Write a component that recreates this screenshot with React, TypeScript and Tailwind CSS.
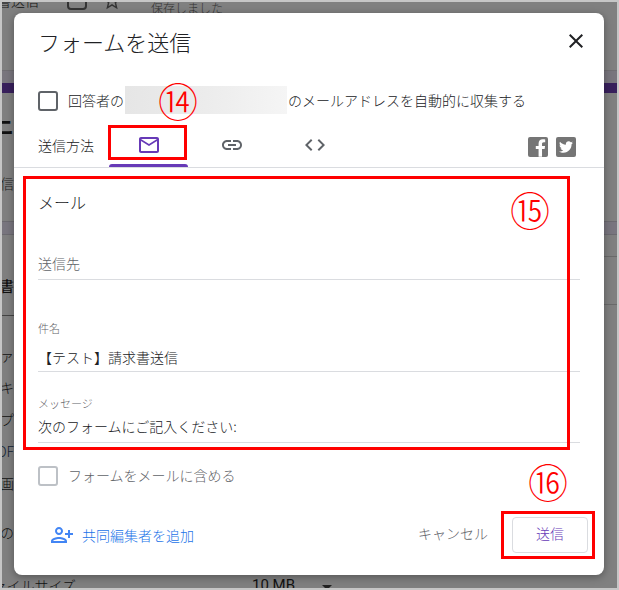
import { useState } from "react";
import { FaFacebookF, FaTwitter } from "react-icons/fa";
import {
  MdArrowDropDown,
  MdClose,
  MdCode,
  MdLink,
  MdOutlineEmail,
  MdOutlinePersonAddAlt1,
  MdStarBorder,
} from "react-icons/md";

const TABS = [
  { id: "mail", label: "メール", Icon: MdOutlineEmail },
  { id: "link", label: "リンク", Icon: MdLink },
  { id: "embed", label: "埋め込み", Icon: MdCode },
];

function StepMark({ n, className }: { n: string; className: string }) {
  return (
    <span className={`pointer-events-none absolute text-[40px] leading-10 text-[#f00] ${className}`}>{n}</span>
  );
}

// Dimmed form editor behind the dialog
function EditorBackdrop() {
  return (
    <div aria-hidden="true" className="absolute inset-0 flex flex-col overflow-hidden bg-[#808080] text-sm leading-5 text-[#111]">
      <div className="h-[69px] shrink-0 border-b border-[#706e73]">
        <div className="-mt-3 flex h-5 items-start">
          <span className="flex w-[37px] shrink-0 justify-end whitespace-nowrap">書送信</span>
          <span className="ml-7 h-5 w-5 rounded-sm border-2 border-[#333]" />
          <MdStarBorder className="ml-[14px] size-[22px] text-[#333]" />
          <span className="mt-3 ml-7 text-xs leading-3 text-[#333]">保存しました</span>
        </div>
      </div>
      <div className="h-3 shrink-0 bg-[#79767e]" />
      <div className="h-[10px] shrink-0 bg-[#38205c]" />
      <div className="flex h-[128px] w-3 shrink-0 flex-col items-end overflow-hidden whitespace-nowrap">
        <span className="mt-6 text-xl leading-5 font-bold">ニ</span>
        <span className="mt-9 text-[#222]">送信</span>
      </div>
      <div className="h-[14px] shrink-0 border-y border-[#6c6a70] bg-[#79767f]" />
      <div className="flex h-[340px] shrink-0 justify-between">
        <div className="flex w-3 flex-col items-end overflow-hidden whitespace-nowrap">
          <span className="mt-10 font-medium">書</span>
          <span className="mt-5 w-3 border-t border-[#444]" />
          <span className="mt-[29px]">ファ</span>
          <span className="mt-3">キ</span>
          <span className="mt-3">プ</span>
          <span className="mt-3 text-[#123]">DF</span>
          <span className="mt-3">画</span>
          <span className="mt-[29px]">ルの</span>
        </div>
        <div className="w-[13px]">
          <div className="h-[22px] border-b border-[#6a6a6a]" />
          <div className="h-12 border-b border-[#6a6a6a]" />
        </div>
      </div>
      <div className="flex h-5 shrink-0 whitespace-nowrap">
        <span className="flex w-[74px] shrink-0 justify-end">ファイルサイズ</span>
        <span className="ml-[176px] font-[Roboto,sans-serif] text-[15px] font-normal">10 MB</span>
        <MdArrowDropDown className="ml-5 size-6 text-[#222]" />
      </div>
    </div>
  );
}

export default function App() {
  const [tab, setTab] = useState("mail");
  const [to, setTo] = useState("");
  const [subject, setSubject] = useState("【テスト】請求書送信");
  const [message, setMessage] = useState("次のフォームにご記入ください:");

  return (
    <div className="relative flex min-h-screen flex-col border-2 border-[#c6c6c6] pt-[11px] pr-[13px] pb-[13px] pl-3 font-['Noto_Sans_CJK_JP',sans-serif] font-light">
      <EditorBackdrop />

      <div role="dialog" aria-labelledby="dialog-title" className="relative rounded-lg bg-white text-sm text-[#202124] shadow-[0_2px_8px_rgba(0,0,0,0.35)]">
        <header className="flex h-[60px] items-center justify-between pr-4 pb-1 pl-6">
          <h1 id="dialog-title" className="text-[22px] leading-8">フォームを送信</h1>
          <button type="button" aria-label="閉じる">
            <MdClose className="size-6" />
          </button>
        </header>

        <div className="relative flex h-14 items-center pl-6">
          <input id="collect" type="checkbox" className="size-5 appearance-none rounded-[3px] border-2 border-[#5f6368]" />
          <label htmlFor="collect" className="ml-[10px] flex items-center pb-0.5 whitespace-nowrap">
            回答者の
            <span className="mx-px h-7 w-[162px] bg-linear-to-r from-[#e6e6e6] via-[#ececec] to-[#f5f5f5]" />
            のメールアドレスを自動的に収集する
          </label>
          <StepMark n="⑭" className="top-[7px] left-36" />
        </div>

        <div className="flex h-[39px] items-start border-b border-[#dadce0] pr-7 pl-6">
          <span className="w-[71px] shrink-0 leading-8">送信方法</span>
          <div role="tablist" className="flex flex-1 gap-1">
            {TABS.map(({ id, label, Icon }) => (
              <button
                key={id}
                type="button"
                role="tab"
                aria-selected={tab === id}
                aria-label={label}
                onClick={() => setTab(id)}
                className="relative flex w-[79px] flex-col items-center"
              >
                <Icon className={`my-1 size-6 ${tab === id ? "text-[#673ab7]" : "text-[#5f6368]"}`} />
                <span className={`mt-[3px] h-[3px] w-full rounded-t-sm ${tab === id ? "bg-[#673ab7]" : ""}`} />
                {id === "mail" && (
                  <span className="pointer-events-none absolute -top-1 -left-px h-[35px] w-[79px] border-3 border-[#f00]" />
                )}
              </button>
            ))}
          </div>
          <div className="mt-2 flex gap-2">
            <a href="#facebook" aria-label="Facebook" className="flex size-5 items-end justify-end rounded-xs bg-[#757575] pr-0.5 text-white">
              <FaFacebookF className="h-[18px] w-[11px]" />
            </a>
            <a href="#twitter" aria-label="Twitter" className="flex size-5 items-center justify-center rounded-xs bg-[#757575] text-white">
              <FaTwitter className="size-[14px]" />
            </a>
          </div>
        </div>

        <section className="relative flex flex-col px-6 pt-[22px]">
          <h2 className="text-base leading-6">メール</h2>
          <input
            aria-label="送信先"
            placeholder="送信先"
            value={to}
            onChange={(e) => setTo(e.target.value)}
            className="mt-[34px] h-8 border-b border-[#dadce0] pb-0.5 outline-none placeholder:text-[#5f6368]"
          />
          <label htmlFor="subject" className="mt-10 text-[11px] leading-4 text-[#5f6368]">件名</label>
          <input
            id="subject"
            value={subject}
            onChange={(e) => setSubject(e.target.value)}
            className="mt-1 h-8 border-b border-[#dadce0] pt-0.5 outline-none"
          />
          <label htmlFor="message" className="mt-[23px] text-[11px] leading-4 text-[#5f6368]">メッセージ</label>
          <input
            id="message"
            value={message}
            onChange={(e) => setMessage(e.target.value)}
            className="h-8 border-b border-[#dadce0] pb-0.5 outline-none"
          />
          <div className="pointer-events-none absolute top-2 right-[34px] -bottom-[7px] left-[9px] border-3 border-[#f00]">
            <StepMark n="⑮" className="top-[10px] right-[17px]" />
          </div>
        </section>

        <div className="mt-[23px] flex h-5 items-center pl-6">
          <input id="include" type="checkbox" className="size-5 appearance-none rounded-[3px] border-2 border-[#bdc1c6]" />
          <label htmlFor="include" className="ml-[10px] pb-0.5 text-[#5f6368]">フォームをメールに含める</label>
        </div>

        <footer className="mt-[31px] flex items-center justify-between pr-4 pb-[22px] pl-9">
          <button type="button" className="flex items-center gap-2 text-[#1a73e8]">
            <MdOutlinePersonAddAlt1 className="size-6 text-[#4285f4]" />
            共同編集者を追加
          </button>
          <div className="flex items-center gap-6">
            <button type="button" className="pb-1 text-[#5f6368]">キャンセル</button>
            <div className="relative">
              <button type="button" className="block h-9 w-[76px] rounded border border-[#dadce0] pb-1 text-[#673ab7]">送信</button>
              <span className="pointer-events-none absolute -top-[6px] -right-[7px] -bottom-[6px] -left-[11px] border-3 border-[#f00]" />
              <StepMark n="⑯" className="-top-14 left-4" />
            </div>
          </div>
        </footer>
      </div>
    </div>
  );
}
